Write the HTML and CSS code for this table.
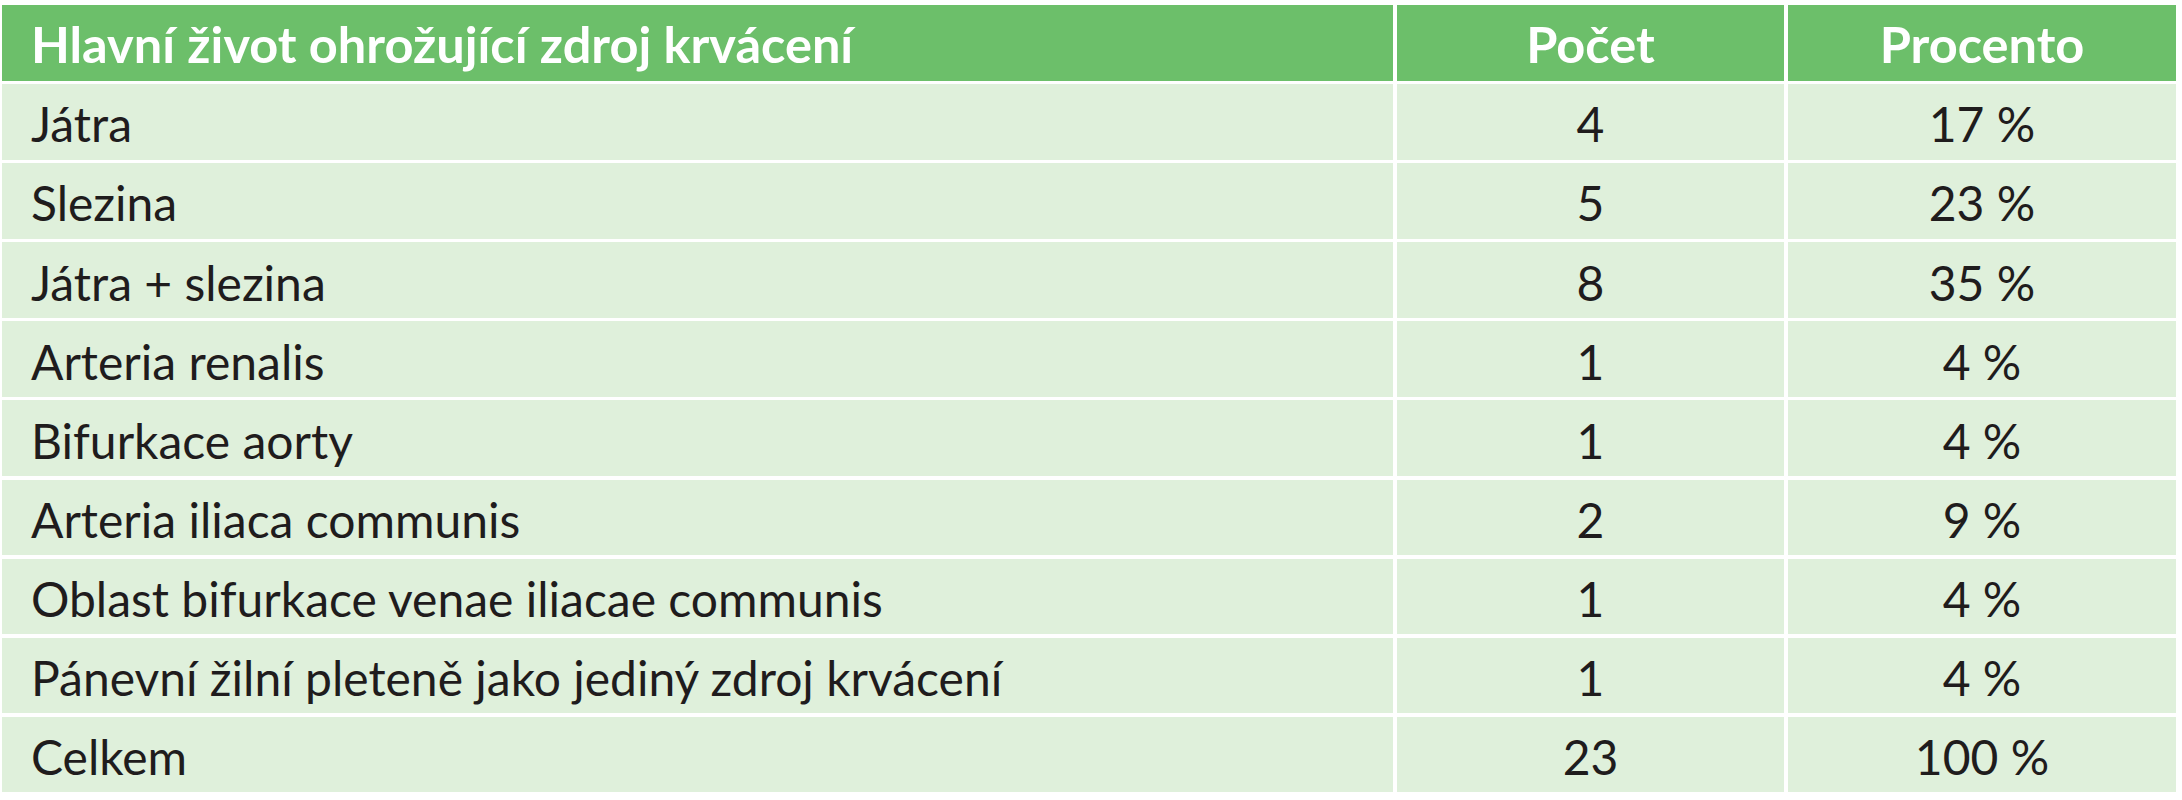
FILE: index.html
```html
<!DOCTYPE html>
<html lang="cs">
<head>
<meta charset="utf-8">
<title>Zdroj krvácení</title>
<link rel="stylesheet" href="styles.css">
</head>
<body>
<div class="table">
  <div class="cell head">Hlavní život ohrožující zdroj krvácení</div>
  <div class="cell head num">Počet</div>
  <div class="cell head num">Procento</div>

  <div class="cell">Játra</div>
  <div class="cell num">4</div>
  <div class="cell num">17 %</div>

  <div class="cell">Slezina</div>
  <div class="cell num">5</div>
  <div class="cell num">23 %</div>

  <div class="cell">Játra + slezina</div>
  <div class="cell num">8</div>
  <div class="cell num">35 %</div>

  <div class="cell">Arteria renalis</div>
  <div class="cell num">1</div>
  <div class="cell num">4 %</div>

  <div class="cell">Bifurkace aorty</div>
  <div class="cell num">1</div>
  <div class="cell num">4 %</div>

  <div class="cell">Arteria iliaca communis</div>
  <div class="cell num">2</div>
  <div class="cell num">9 %</div>

  <div class="cell">Oblast bifurkace venae iliacae communis</div>
  <div class="cell num">1</div>
  <div class="cell num">4 %</div>

  <div class="cell">Pánevní žilní pleteně jako jediný zdroj krvácení</div>
  <div class="cell num">1</div>
  <div class="cell num">4 %</div>

  <div class="cell">Celkem</div>
  <div class="cell num">23</div>
  <div class="cell num">100 %</div>
</div>
</body>
</html>
```

FILE: styles.css
```css
html, body {
  margin: 0;
  padding: 0;
  background: #ffffff;
}
body {
  padding: 5px 6px 0 2px;
  font-family: Lato, "Liberation Sans", sans-serif;
  color: #1f1c1d;
}
.table {
  display: grid;
  grid-template-columns: 1391px 387px 388px;
  grid-auto-rows: 75.6px;
  column-gap: 4px;
  row-gap: 3.5px;
  width: 2174px;
}
.cell {
  background: #dff0db;
  display: flex;
  align-items: center;
  padding: 5px 0 0 29px;
  font-size: 48px;
  line-height: 1;
  white-space: nowrap;
}
.head {
  background: #6cbf6a;
  color: #ffffff;
  font-weight: 700;
  font-size: 50.5px;
  padding-top: 3px;
}
.num {
  justify-content: center;
  padding-left: 0;
}
```
